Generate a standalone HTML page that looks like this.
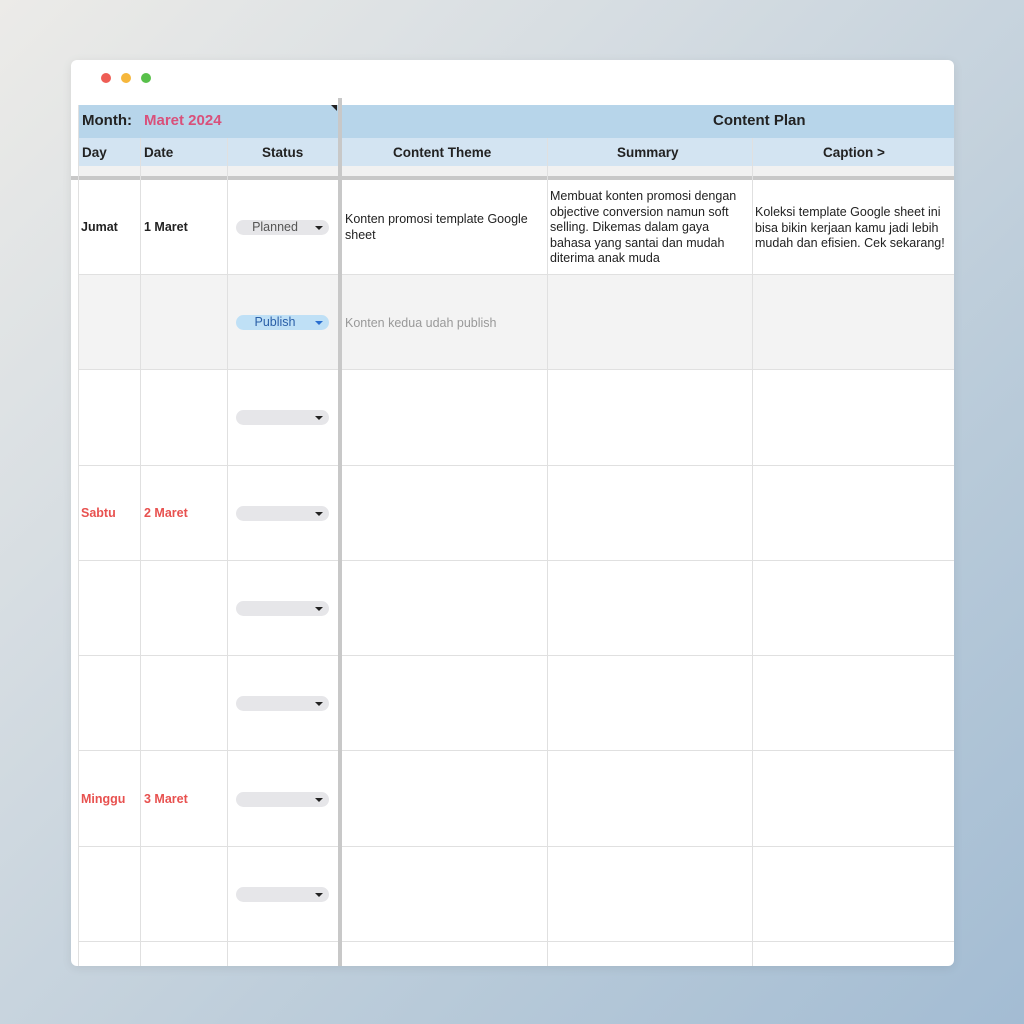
<!DOCTYPE html>
<html><head><style>
*{margin:0;padding:0;box-sizing:border-box}
body{width:1024px;height:1024px;overflow:hidden;position:relative;font-family:"Liberation Sans",sans-serif;
background:linear-gradient(135deg,#ecebe8 0%,#d3dbe1 35%,#b8cad9 70%,#a3bcd3 100%)}
.win{position:absolute;left:71px;top:60px;width:883px;height:906px;background:#fff;border-radius:6px;overflow:hidden;box-shadow:0 2px 10px rgba(0,0,0,.08)}
.a{position:absolute}
.dot{position:absolute;top:13px;width:10px;height:10px;border-radius:50%}
.t{position:absolute;font-size:12.5px;color:#222;white-space:nowrap}
.b{font-weight:bold}
.chip{position:absolute;left:165px;width:93px;height:15px;border-radius:8px;background:#e6e6e9}
.chip:after{content:"";position:absolute;right:6px;top:6px;border-left:4px solid transparent;border-right:4px solid transparent;border-top:4px solid #222}
.chip span{position:absolute;left:0;width:78px;text-align:center;font-size:12.5px;line-height:15px;color:#555}
.chip.pub{background:#bfe0f6}
.chip.pub:after{border-top-color:#2a6fd0}
.vl{position:absolute;top:45px;bottom:0;width:1px;background:#e0e0e0}
.hl{position:absolute;left:7px;right:0;height:1px;background:#e0e0e0}
.red{color:#e8514f;font-weight:bold}
</style></head><body>
<div class="win">
<div class="dot" style="left:30px;background:#ee5d55"></div>
<div class="dot" style="left:50px;background:#f6b73c"></div>
<div class="dot" style="left:70px;background:#58c04a"></div>
<div class="a" style="left:7px;top:45px;width:876px;height:33px;background:#b7d5ea"></div>
<div class="a" style="left:7px;top:78px;width:876px;height:28px;background:#d3e4f2"></div>
<div class="a" style="left:7px;top:106px;width:876px;height:10px;background:#f1f1f1"></div>
<div class="a" style="left:7px;top:214px;width:876px;height:96px;background:#f3f3f3"></div>
<div class="a" style="left:0;top:116px;width:883px;height:4px;background:#c8c8c8"></div>
<div class="t b" style="left:11px;top:52px;font-size:15px">Month:</div>
<div class="t b" style="left:73px;top:52px;font-size:15px;color:#d9507a">Maret 2024</div>
<div class="a" style="left:260px;top:45px;border-left:6px solid transparent;border-top:6px solid #222"></div>
<div class="t b" style="left:642px;top:52px;font-size:15px">Content Plan</div>
<div class="t b" style="left:11px;top:85px;font-size:13.5px">Day</div>
<div class="t b" style="left:73px;top:85px;font-size:13.5px">Date</div>
<div class="t b" style="left:191px;top:85px;font-size:13.5px">Status</div>
<div class="t b" style="left:322px;top:85px;font-size:13.5px">Content Theme</div>
<div class="t b" style="left:546px;top:85px;font-size:13.5px">Summary</div>
<div class="t b" style="left:752px;top:85px;font-size:13.5px">Caption &gt;</div>
<div class="vl" style="left:69px;top:78px"></div>
<div class="vl" style="left:156px;top:78px"></div>
<div class="vl" style="left:476px;top:78px"></div>
<div class="vl" style="left:681px;top:78px"></div>
<div class="vl" style="left:7px;top:45px"></div>
<div class="hl" style="top:214px"></div><div class="hl" style="top:309px"></div>
<div class="hl" style="top:405px"></div><div class="hl" style="top:500px"></div>
<div class="hl" style="top:595px"></div><div class="hl" style="top:690px"></div>
<div class="hl" style="top:786px"></div><div class="hl" style="top:881px"></div>
<div class="a" style="left:267px;top:38px;width:4px;height:868px;background:#c8c8c8"></div>
<div class="t b" style="left:10px;top:160px">Jumat</div>
<div class="t b" style="left:73px;top:160px">1 Maret</div>
<div class="t red" style="left:10px;top:446px">Sabtu</div>
<div class="t red" style="left:73px;top:446px">2 Maret</div>
<div class="t red" style="left:10px;top:732px">Minggu</div>
<div class="t red" style="left:73px;top:732px">3 Maret</div>
<div class="chip" style="top:160px"><span>Planned</span></div>
<div class="chip pub" style="top:255px"><span style="color:#2a5fa8">Publish</span></div>
<div class="chip" style="top:350px"></div>
<div class="chip" style="top:446px"></div>
<div class="chip" style="top:541px"></div>
<div class="chip" style="top:636px"></div>
<div class="chip" style="top:732px"></div>
<div class="chip" style="top:827px"></div>
<div class="t" style="left:274px;top:152px;line-height:15.5px">Konten promosi template Google<br>sheet</div>
<div class="t" style="left:274px;top:256px;color:#999">Konten kedua udah publish</div>
<div class="t" style="left:479px;top:129px;line-height:15.5px">Membuat konten promosi dengan<br>objective conversion namun soft<br>selling. Dikemas dalam gaya<br>bahasa yang santai dan mudah<br>diterima anak muda</div>
<div class="t" style="left:684px;top:145px;line-height:15.5px">Koleksi template Google sheet ini<br>bisa bikin kerjaan kamu jadi lebih<br>mudah dan efisien. Cek sekarang!</div>
</div>
</body></html>
